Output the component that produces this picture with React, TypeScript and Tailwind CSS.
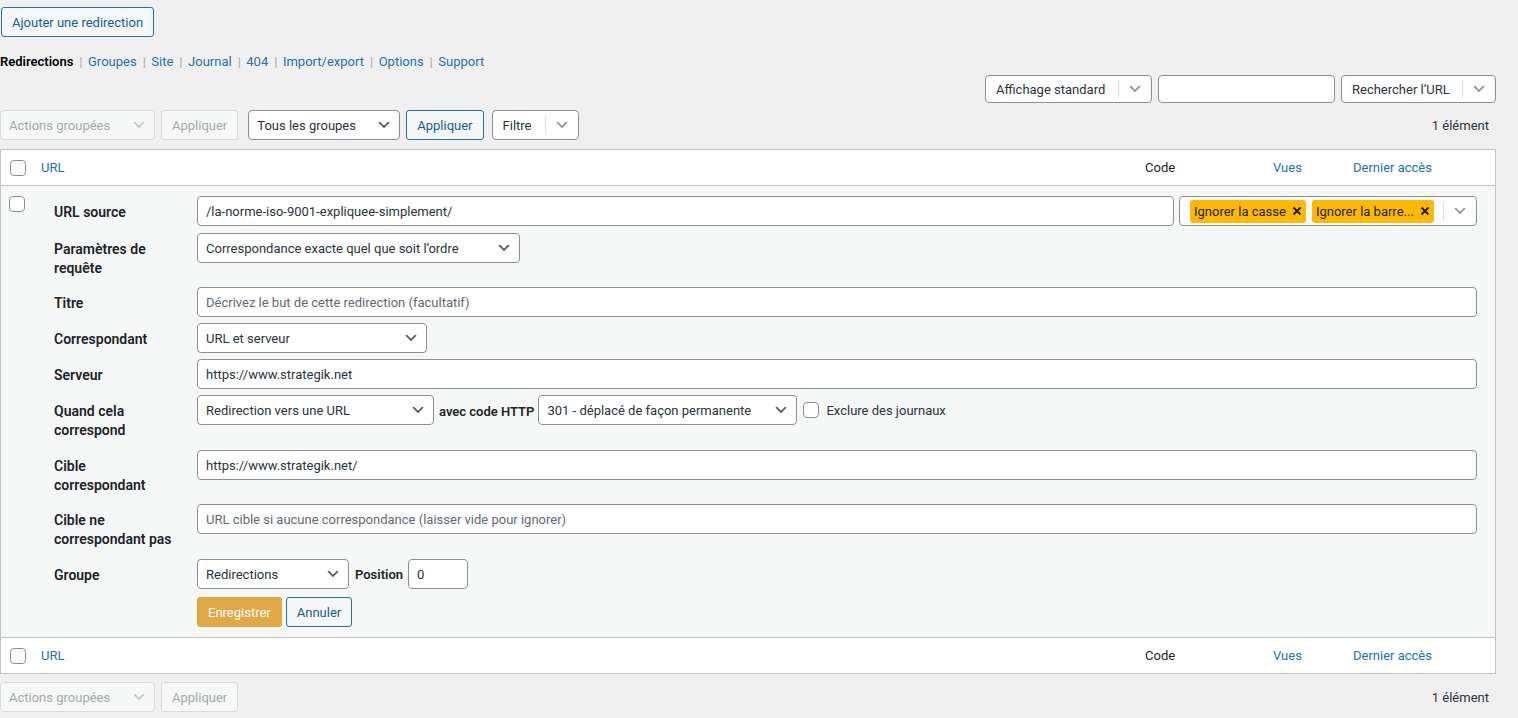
import React from "react";

function Chevron({ className = "" }: { className?: string }) {
  return (
    <svg viewBox="0 0 20 20" className={`h-4 w-4 shrink-0 ${className}`}>
      <path d="M5 6l5 5 5-5 2 1-7 7-7-7 2-1z" fill="currentColor" />
    </svg>
  );
}

function Select({ label, w, disabled = false, h = "h-[30px]" }: { label: string; w: string; disabled?: boolean; h?: string }) {
  return (
    <div
      className={`flex ${h} ${w} items-center rounded-[4px] border pl-[8px] pr-[7px] ${
        disabled ? "border-[#dcdcde] bg-[#f6f7f7] text-[#a7aaad]" : "border-[#8c8f94] bg-white text-[#2c3338]"
      }`}
    >
      <span className="truncate">{label}</span>
      <Chevron className={`ml-auto ${disabled ? "text-[#c3c4c7]" : "text-[#50575e]"}`} />
    </div>
  );
}

function Dropdown({ label, w, h = "h-[28px]" }: { label: string; w: string; h?: string }) {
  return (
    <div className={`flex ${h} ${w} items-center rounded-[4px] border border-[#8c8f94] bg-white text-[#2c3338]`}>
      <span className="truncate pl-[10px]">{label}</span>
      <span className="ml-auto flex h-[18px] items-center border-l border-[#dcdcde] px-[8px]">
        <Chevron className="text-[#8c8f94]" />
      </span>
    </div>
  );
}

function Button({ label, disabled = false }: { label: string; disabled?: boolean }) {
  return (
    <button
      className={`h-[30px] rounded-[3px] border px-[10px] ${
        disabled ? "border-[#dcdcde] bg-[#f6f7f7] text-[#a7aaad]" : "border-[#2271b1] bg-[#f6f7f7] text-[#135e96]"
      }`}
    >
      {label}
    </button>
  );
}

function Input({ value, placeholder, w = "w-full" }: { value?: string; placeholder?: string; w?: string }) {
  return (
    <div className={`flex h-[30px] ${w} items-center rounded-[4px] border border-[#8c8f94] bg-white px-[8px]`}>
      {value ? <span className="text-[#2c3338]">{value}</span> : <span className="text-[#646970]">{placeholder}</span>}
    </div>
  );
}

function Checkbox({ className = "" }: { className?: string }) {
  return <span className={`block h-[16px] w-[16px] rounded-[4px] border border-[#8c8f94] bg-white ${className}`} />;
}

function Tag({ label }: { label: string }) {
  return (
    <span className="flex h-[23px] items-center gap-[6px] rounded-[3px] bg-[#ffb900] px-[4px] text-[#1e1e1e]">
      {label}
      <svg viewBox="0 0 10 10" className="h-[10px] w-[10px]">
        <path d="M1.5 1.5l7 7M8.5 1.5l-7 7" stroke="#1e1e1e" strokeWidth="2" />
      </svg>
    </span>
  );
}

function HeadRow({ top }: { top?: boolean }) {
  return (
    <div className={`flex h-[36px] items-center bg-white ${top ? "border-b" : "border-t"} border-[#c3c4c7]`}>
      <div className="w-[32px] pl-[9px]">
        <Checkbox />
      </div>
      <div className="flex-1 pl-[8px] text-[#2271b1]">URL</div>
      <div className="w-[128px] pl-[8px] text-[#1d2327]">Code</div>
      <div className="w-[80px] pl-[8px] text-[#2271b1]">Vues</div>
      <div className="w-[150px] pl-[8px] text-[#2271b1]">Dernier accès</div>
    </div>
  );
}

function Label({ children, pb = "pb-[9px]" }: { children: React.ReactNode; pb?: string }) {
  return <div className={`${pb} pr-[10px] pt-[7px] text-[14px] font-semibold leading-[19px] text-[#1d2327]`}>{children}</div>;
}

function Field({ children, pb = "pb-[6px]" }: { children: React.ReactNode; pb?: string }) {
  return <div className={`flex items-start gap-[6px] ${pb}`}>{children}</div>;
}

export default function App() {
  return (
    <div className="min-h-screen bg-[#f0f0f1] pr-[22px] pt-[7px] font-['Segoe_UI',Roboto,sans-serif] text-[13px] leading-[19px] text-[#3c434a]">
      <div className="pl-[1px]">
        <Button label="Ajouter une redirection" />
      </div>

      <div className="mt-[15px] flex h-[19px] items-center text-[#2271b1]">
        <span className="font-semibold text-[#000]">Redirections</span>
        {["Groupes", "Site", "Journal", "404", "Import/export", "Options", "Support"].map((l) => (
          <React.Fragment key={l}>
            <span className="pl-[6px] pr-[5.5px] text-[#a7aaad]">|</span>
            <span>{l}</span>
          </React.Fragment>
        ))}
      </div>

      <div className="mt-[4px] flex justify-end gap-[6px]">
        <Dropdown label="Affichage standard" w="w-[167px]" />
        <div className="h-[28px] w-[177px] rounded-[4px] border border-[#8c8f94] bg-white" />
        <Dropdown label="Rechercher l’URL" w="w-[155px]" />
      </div>

      <div className="mt-[7px] flex items-center">
        <Select label="Actions groupées" w="w-[155px]" disabled />
        <div className="ml-[6px]">
          <Button label="Appliquer" disabled />
        </div>
        <div className="ml-[10px]">
          <Select label="Tous les groupes" w="w-[152px]" />
        </div>
        <div className="ml-[6px]">
          <Button label="Appliquer" />
        </div>
        <div className="ml-[8px]">
          <Dropdown label="Filtre" w="w-[87px]" h="h-[30px]" />
        </div>
        <span className="ml-auto pr-[7px] text-[#2c3338]">1 élément</span>
      </div>

      <div className="mt-[9px] border border-[#c3c4c7]">
        <HeadRow top />
        <div className="flex bg-[#f6f7f7] pb-[10px] pt-[10px]">
          <div className="w-[53px] pl-[8px]">
            <Checkbox />
          </div>
          <div className="grid flex-1 grid-cols-[143px_1fr] pr-[18px]">
            <Label>URL source</Label>
            <Field pb="pb-[7px]">
              <Input value="/la-norme-iso-9001-expliquee-simplement/" w="flex-1" />
              <div className="ml-[-1px] flex h-[30px] w-[298px] items-center rounded-[4px] border border-[#8c8f94] bg-white pl-[10px]">
                <div className="flex gap-[6px]">
                  <Tag label="Ignorer la casse" />
                  <Tag label="Ignorer la barre..." />
                </div>
                <span className="ml-auto flex h-[18px] items-center border-l border-[#dcdcde] px-[8px]">
                  <Chevron className="text-[#8c8f94]" />
                </span>
              </div>
            </Field>

            <Label>
              Paramètres de
              <br />
              requête
            </Label>
            <Field>
              <Select label="Correspondance exacte quel que soit l’ordre" w="w-[323px]" />
            </Field>

            <Label>Titre</Label>
            <Field>
              <Input placeholder="Décrivez le but de cette redirection (facultatif)" />
            </Field>

            <Label>Correspondant</Label>
            <Field>
              <Select label="URL et serveur" w="w-[230px]" />
            </Field>

            <Label>Serveur</Label>
            <Field>
              <Input value="https://www.strategik.net" />
            </Field>

            <Label pb="pb-[10px]">
              Quand cela
              <br />
              correspond
            </Label>
            <div className="flex items-start pb-[6px]">
              <Select label="Redirection vers une URL" w="w-[237px]" />
              <span className="ml-[5px] mt-[7px] font-semibold text-[#1d2327]">avec code HTTP</span>
              <div className="ml-[4px]">
                <Select label="301 - déplacé de façon permanente" w="w-[259px]" />
              </div>
              <Checkbox className="ml-[6px] mt-[7px]" />
              <span className="ml-[7px] mt-[6px] text-[#2c3338]">Exclure des journaux</span>
            </div>

            <Label>
              Cible
              <br />
              correspondant
            </Label>
            <Field>
              <Input value="https://www.strategik.net/" />
            </Field>

            <Label pb="pb-[10px]">
              Cible ne
              <br />
              correspondant pas
            </Label>
            <Field>
              <Input placeholder="URL cible si aucune correspondance (laisser vide pour ignorer)" />
            </Field>

            <Label>Groupe</Label>
            <div className="flex items-center pb-[8px]">
              <Select label="Redirections" w="w-[152px]" />
              <span className="ml-[6px] font-semibold text-[#1d2327]">Position</span>
              <div className="ml-[5px]">
                <Input value="0" w="w-[60px]" />
              </div>
            </div>

            <div />
            <div className="flex gap-[4px]">
              <button className="h-[30px] rounded-[3px] border border-[#dfa945] bg-[#dfa945] px-[10px] text-white">Enregistrer</button>
              <Button label="Annuler" />
            </div>
          </div>
        </div>
        <HeadRow />
      </div>

      <div className="mt-[8px] flex items-center">
        <Select label="Actions groupées" w="w-[155px]" disabled />
        <div className="ml-[6px]">
          <Button label="Appliquer" disabled />
        </div>
        <span className="ml-auto pr-[7px] text-[#2c3338]">1 élément</span>
      </div>
    </div>
  );
}
